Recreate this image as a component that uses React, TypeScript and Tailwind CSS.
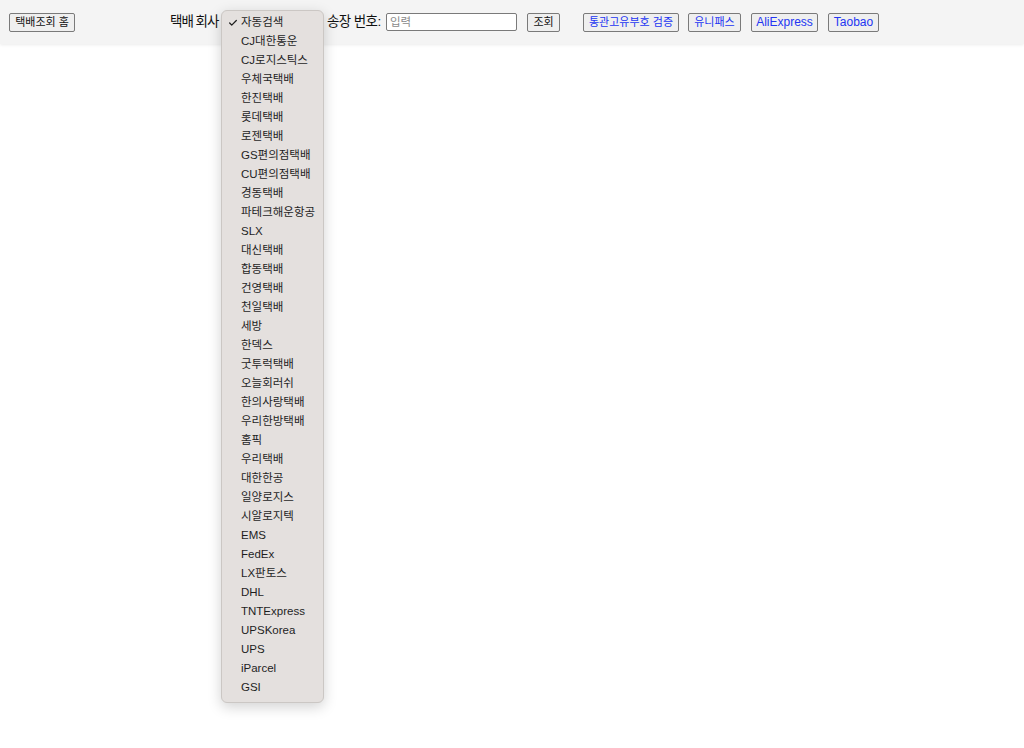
import { Check } from "lucide-react";

const companies = [
  "CJ대한통운",
  "CJ로지스틱스",
  "우체국택배",
  "한진택배",
  "롯데택배",
  "로젠택배",
  "GS편의점택배",
  "CU편의점택배",
  "경동택배",
  "파테크해운항공",
  "SLX",
  "대신택배",
  "합동택배",
  "건영택배",
  "천일택배",
  "세방",
  "한덱스",
  "굿투럭택배",
  "오늘회러쉬",
  "한의사랑택배",
  "우리한방택배",
  "홈픽",
  "우리택배",
  "대한한공",
  "일양로지스",
  "시알로지텍",
  "EMS",
  "FedEx",
  "LX판토스",
  "DHL",
  "TNTExpress",
  "UPSKorea",
  "UPS",
  "iParcel",
  "GSI",
];

const font = "font-['Liberation_Sans','Noto_Sans_CJK_KR',sans-serif]";
const btn =
  "h-[19px] flex items-center justify-center bg-[#efefef] border border-[#7a7a7a] rounded-[2px] text-[11px] leading-none whitespace-nowrap";

export default function App() {
  return (
    <div className={`min-h-[748px] bg-white ${font}`}>
      {/* Top bar */}
      <div className="relative h-[44px] bg-[#f4f4f4] shadow-[0_1px_3px_rgba(0,0,0,0.08)] flex items-center">
        <button className={`${btn} ml-[9px] w-[66px] text-[#111]`}>택배조회 홈</button>

        <span className="ml-[95px] w-[48px] text-[13.5px] tracking-[-1px] text-[#111] whitespace-nowrap">택배 회사</span>

        {/* select (opened) */}
        <div className="relative ml-[3px] w-[103px] h-[19px]">
          <div className="absolute left-0 top-[-3px] w-[103px] z-10 bg-[#e4e0de] border border-[#cbc7c4] rounded-[6px] shadow-[0_4px_14px_rgba(0,0,0,0.18)] pt-[3px] pb-[4px]">
            <div className="h-[19px] flex items-center text-[11.5px] text-[#1e1e1e]">
              <Check className="w-[10px] h-[10px] ml-[6px] mr-[3px]" strokeWidth={3} />
              자동검색
            </div>
            {companies.map((c) => (
              <div key={c} className="h-[19px] flex items-center pl-[19px] text-[11.5px] text-[#1e1e1e]">
                {c}
              </div>
            ))}
          </div>
        </div>

        <span className="ml-[3px] w-[55px] text-[13.5px] tracking-[-0.6px] text-[#111] whitespace-nowrap">송장 번호:</span>
        <input
          placeholder="입력"
          className="ml-[4px] w-[131px] h-[18px] bg-white border border-[#7a7a7a] rounded-[2px] px-[3px] text-[11.5px] placeholder:text-[#8a8a8a] outline-none"
        />
        <button className={`${btn} ml-[10px] w-[33px] text-[#111]`}>조회</button>

        <button className={`${btn} ml-[23px] w-[96px] text-[#2336f2]`}>통관고유부호 검증</button>
        <button className={`${btn} ml-[9px] w-[53px] text-[#2336f2]`}>유니패스</button>
        <button className={`${btn} ml-[10px] w-[67px] text-[#2336f2] text-[12px]`}>AliExpress</button>
        <button className={`${btn} ml-[10px] w-[51px] text-[#2336f2] text-[12px]`}>Taobao</button>
      </div>
    </div>
  );
}
